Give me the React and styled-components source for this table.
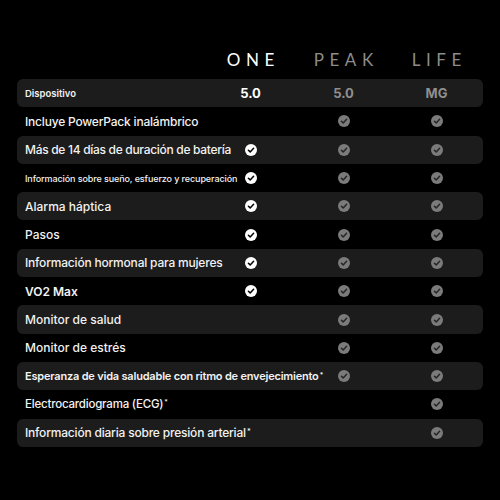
import React from "react";
import styled, { createGlobalStyle } from "styled-components";

const GlobalStyle = createGlobalStyle`
  html, body {
    margin: 0;
    padding: 0;
    background: #000;
  }
  body {
    font-family: Inter, "Noto Sans", sans-serif;
    color: #f2f2f2;
  }
`;

const Page = styled.div`
  width: 500px;
  height: 500px;
  background: #000;
  padding: 47px 17px 0;
  box-sizing: border-box;
  overflow: hidden;
`;

const Grid = styled.div`
  display: grid;
  grid-template-columns: minmax(0, 1fr) 93px 93px 93px;
`;

const Titles = styled(Grid)`
  height: 24px;
  align-items: center;
  margin-bottom: 8px;
`;

const Title = styled.div`
  grid-column: ${(p) => p.col};
  text-align: center;
  font-family: Lato, sans-serif;
  font-weight: 400;
  font-size: 17px;
  letter-spacing: 5.5px;
  padding-left: 5.5px;
  color: ${(p) => (p.main ? "#ffffff" : "#8c8c8c")};
`;

const Row = styled(Grid)`
  height: 28.3px;
  align-items: center;
  border-radius: 6px;
  background: ${(p) => (p.shaded ? "#1c1c1c" : "transparent")};
`;

const Label = styled.div`
  grid-column: 1;
  grid-row: 1;
  padding-left: 8px;
  white-space: nowrap;
  overflow: visible;
  font-size: ${(p) => p.size || 12}px;
  font-weight: ${(p) => p.weight || 500};
  letter-spacing: ${(p) => p.spacing || 0}px;
  color: #f2f2f2;
`;

const Star = styled.sup`
  font-size: 0.6em;
  vertical-align: 0.45em;
  line-height: 0;
  margin-left: 1px;
`;

const Cell = styled.div`
  grid-column: ${(p) => p.col};
  grid-row: 1;
  display: flex;
  justify-content: center;
  align-items: center;
  font-size: 13px;
  font-weight: 700;
  color: ${(p) => (p.main ? "#ffffff" : "#8f8f8f")};
`;

const Check = ({ main }) => (
  <svg width="12" height="12" viewBox="0 0 12 12">
    <circle cx="6" cy="6" r="6" fill={main ? "#ffffff" : "#7b7b7b"} />
    <path
      d="M3.4 6.2 L5.2 7.9 L8.6 4.3"
      fill="none"
      stroke={main ? "#000" : "#262626"}
      strokeWidth="1.5"
      strokeLinecap="round"
      strokeLinejoin="round"
    />
  </svg>
);

const rows = [
  { label: "Incluye PowerPack inalámbrico", one: false, peak: true, life: true, spacing: -0.2 },
  { label: "Más de 14 días de duración de batería", one: true, peak: true, life: true, spacing: -0.3 },
  {
    label: "Información sobre sueño, esfuerzo y recuperación",
    one: true,
    peak: true,
    life: true,
    size: 9,
    spacing: -0.1,
  },
  { label: "Alarma háptica", one: true, peak: true, life: true },
  { label: "Pasos", one: true, peak: true, life: true },
  { label: "Información hormonal para mujeres", one: true, peak: true, life: true, spacing: -0.2 },
  { label: "VO2 Max", one: true, peak: true, life: true, weight: 600 },
  { label: "Monitor de salud", one: false, peak: true, life: true },
  { label: "Monitor de estrés", one: false, peak: true, life: true },
  {
    label: "Esperanza de vida saludable con ritmo de envejecimiento",
    star: true,
    one: false,
    peak: true,
    life: true,
    size: 11,
    weight: 600,
    spacing: -0.2,
  },
  {
    label: "Electrocardiograma (ECG)",
    star: true,
    one: false,
    peak: false,
    life: true,
    size: 11.5,
    spacing: -0.2,
  },
  {
    label: "Información diaria sobre presión arterial",
    star: true,
    one: false,
    peak: false,
    life: true,
    spacing: -0.2,
  },
];

export default function App() {
  return (
    <Page>
      <GlobalStyle />
      <Titles>
        <Title col={2} main>
          ONE
        </Title>
        <Title col={3}>PEAK</Title>
        <Title col={4}>LIFE</Title>
      </Titles>
      <Row shaded>
        <Label size={9.5} weight={600}>
          Dispositivo
        </Label>
        <Cell col={2} main>
          5.0
        </Cell>
        <Cell col={3}>5.0</Cell>
        <Cell col={4}>MG</Cell>
      </Row>
      {rows.map((r, i) => (
        <Row key={r.label} shaded={i % 2 === 1}>
          <Label size={r.size} weight={r.weight} spacing={r.spacing}>
            {r.label}
            {r.star && <Star>*</Star>}
          </Label>
          <Cell col={2}>{r.one && <Check main />}</Cell>
          <Cell col={3}>{r.peak && <Check />}</Cell>
          <Cell col={4}>{r.life && <Check />}</Cell>
        </Row>
      ))}
    </Page>
  );
}
